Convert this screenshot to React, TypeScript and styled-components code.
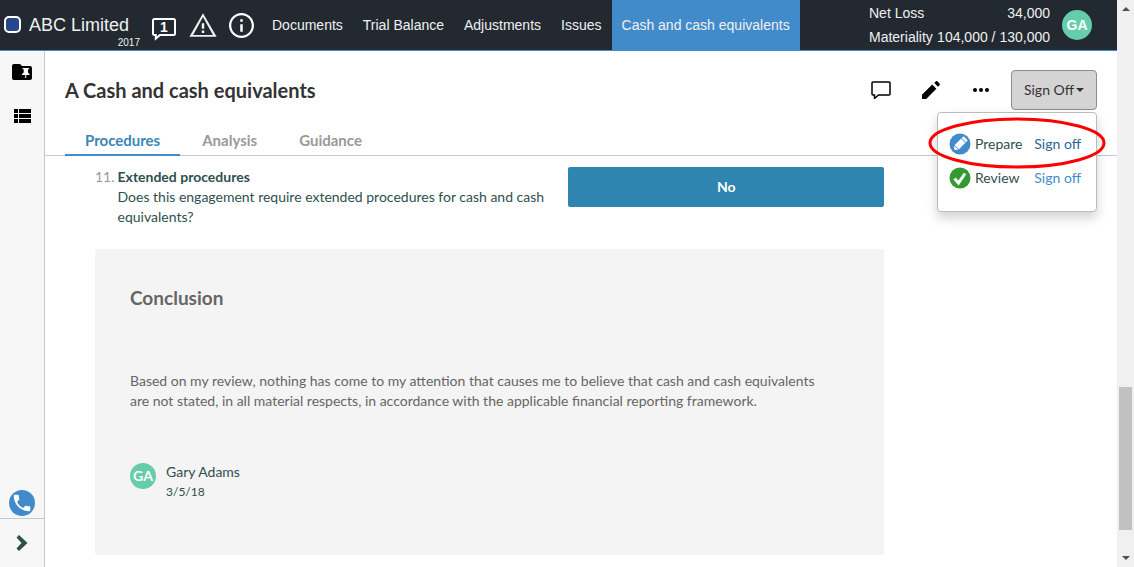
import React from "react";
import styled, { createGlobalStyle } from "styled-components";

const GlobalStyle = createGlobalStyle`
  *, *::before, *::after { box-sizing: border-box; }
  body {
    margin: 0;
    background: #fff;
    color: #2f4f4f;
    font: 14px/20px Lato, "Open Sans", sans-serif;
  }
  button { font: inherit; color: inherit; border: 0; background: none; padding: 0; cursor: pointer; }
  a { text-decoration: none; }
  h1, h2, h3, p, dl, dd, ul, ol { margin: 0; padding: 0; }
  svg { display: block; }
`;

const Screen = styled.div`
  display: flex;
  height: 100vh;
  overflow: hidden;
`;

const Page = styled.div`
  flex: 1;
  min-width: 0;
  display: flex;
  flex-direction: column;
`;

const TopBar = styled.header`
  display: flex;
  flex: none;
  height: 51px;
  padding: 0 25px 0 4px;
  background: #232930;
  border-bottom: 1px solid #428bca;
  color: #f0f0f0;
  font-family: "Liberation Sans", Arial, sans-serif;
`;

const Brand = styled.a`
  display: flex;
  gap: 8px;
  padding-top: 15px;
  color: inherit;
`;

const BrandMark = styled.span`
  width: 17px;
  height: 17px;
  margin-top: 1px;
  border: 2px solid #fff;
  border-radius: 5px;
  background: #27478d;
`;

const BrandText = styled.span`
  display: flex;
  flex-direction: column;
  width: 111px;
  font-size: 18px;
`;

const Year = styled.small`
  align-self: flex-end;
  font-size: 10px;
  line-height: 16px;
`;

const StatusIcons = styled.div`
  display: flex;
  align-items: center;
  gap: 12px;
  margin: 0 8px 0 11px;
`;

const IconButton = styled.button`
  display: flex;
  align-items: center;
  justify-content: center;
`;

const Nav = styled.nav`
  display: flex;
`;

const NavLink = styled.a<{ $active?: boolean }>`
  padding: 0 10px;
  line-height: 50px;
  white-space: nowrap;
  color: inherit;
  background: ${(p) => (p.$active ? "#428bca" : "transparent")};
`;

const Figures = styled.dl`
  margin-left: auto;
  padding-top: 1px;
  width: 181px;
  line-height: 24px;
`;

const Figure = styled.div`
  display: flex;
  justify-content: space-between;
  white-space: nowrap;
`;

const Avatar = styled.span<{ $size: number }>`
  display: flex;
  flex: none;
  align-items: center;
  justify-content: center;
  width: ${(p) => p.$size}px;
  height: ${(p) => p.$size}px;
  border-radius: 50%;
  background: #66cdaa;
  color: #fff;
  font-weight: bold;
`;

const UserButton = styled(IconButton)`
  margin-left: 12px;
`;

const Body = styled.div`
  flex: 1;
  min-height: 0;
  display: flex;
`;

const Sidebar = styled.aside`
  display: flex;
  flex-direction: column;
  align-items: center;
  flex: none;
  width: 45px;
  padding-top: 10px;
  background: #f7f7f7;
  border-right: 1px solid #c8c8c8;
`;

const SideButton = styled(IconButton)`
  width: 24px;
  height: 22px;
  margin-bottom: 22px;
`;

const CallButton = styled(IconButton)`
  width: 26px;
  height: 26px;
  margin: auto 0 2px;
  border-radius: 50%;
  background: #428bca;
`;

const ExpandButton = styled(IconButton)`
  width: 100%;
  height: 49px;
  border-top: 1px solid #c8c8c8;
`;

const Main = styled.main`
  flex: 1;
  min-width: 0;
`;

const TitleRow = styled.div`
  display: flex;
  align-items: center;
  justify-content: space-between;
  padding: 19px 20px 0;
`;

const Title = styled.h1`
  color: #333;
  font-size: 20px;
  line-height: 40px;
`;

const Tools = styled.div`
  display: flex;
  align-items: center;
  gap: 26px;
  color: #000;
`;

const ToolButton = styled(IconButton)`
  width: 24px;
  height: 24px;
`;

const SignOffWrap = styled.div`
  position: relative;
  margin-left: -8px;
`;

const SignOffButton = styled.button`
  display: flex;
  align-items: center;
  justify-content: center;
  gap: 2px;
  width: 86px;
  height: 40px;
  border: 1px solid #8c8c8c;
  border-radius: 4px;
  background: #d4d4d4;
  color: #333;
`;

const Caret = styled.span`
  border: 4px solid transparent;
  border-top-color: currentColor;
  border-bottom: 0;
`;

const Menu = styled.ul`
  position: absolute;
  z-index: 1;
  top: 42px;
  right: 0;
  width: 160px;
  height: 100px;
  padding: 20px 15px 0 11px;
  list-style: none;
  background: #fff;
  border: 1px solid #bbb;
  border-radius: 4px;
  box-shadow: 0 6px 12px rgba(0, 0, 0, 0.18);
`;

const MenuItem = styled.li`
  display: flex;
  align-items: center;
  gap: 4px;
  height: 22px;
  margin-bottom: 12px;
  color: #2f4f4f;
`;

const MenuLink = styled.a<{ $hovered?: boolean }>`
  margin-left: auto;
  color: ${(p) => (p.$hovered ? "#2a6496" : "#428bca")};
`;

const Highlight = styled.li`
  position: absolute;
  top: 3px;
  left: -11px;
  pointer-events: none;
`;

const Tabs = styled.div`
  display: flex;
  gap: 2px;
  padding: 16px 20px 0;
  border-bottom: 1px solid #c8c8c8;
`;

const Tab = styled.button<{ $active?: boolean }>`
  height: 30px;
  margin-bottom: -1px;
  padding: 0 20px;
  border-bottom: 2px solid ${(p) => (p.$active ? "#428bca" : "transparent")};
  color: ${(p) => (p.$active ? "#3a87b7" : "#999")};
  font-size: 15px;
  font-weight: bold;
`;

const Content = styled.div`
  padding: 11px 233px 12px 50px;
`;

const Procedure = styled.section`
  display: grid;
  grid-template-columns: 3fr 2fr;
  align-items: start;
`;

const Question = styled.div`
  display: flex;
  gap: 3px;
  padding-right: 15px;
`;

const Ordinal = styled.span`
  color: #999;
`;

const QuestionTitle = styled.h2`
  font-size: 14px;
`;

const Answer = styled.button`
  height: 40px;
  border-radius: 2px;
  background: #2e86b0;
  color: #fff;
  font-weight: bold;
`;

const Conclusion = styled.section`
  margin-top: 22px;
  padding: 35px 35px 53px;
  border-radius: 2px;
  background: #f4f4f4;
  color: #666;
`;

const ConclusionTitle = styled.h2`
  font-size: 19px;
  line-height: 28px;
`;

const Statement = styled.p`
  margin: 59px 30px 51px 0;
`;

const Signature = styled.div`
  display: flex;
  gap: 10px;
  color: #2f4f4f;
`;

const SignatureAvatar = styled(Avatar)`
  margin-top: 1px;
`;

const SignatureText = styled.div`
  display: flex;
  flex-direction: column;
`;

const SignedOn = styled.time`
  font-size: 12px;
`;

const ScrollTrack = styled.div`
  display: flex;
  flex-direction: column;
  align-items: center;
  flex: none;
  width: 17px;
  padding: 7px 2px;
  background: #f0f0f0;
`;

const ScrollArrow = styled.span<{ $down?: boolean }>`
  border: 4px solid transparent;
  ${(p) =>
    p.$down
      ? "border-top-color: #505050; border-bottom: 0;"
      : "border-bottom-color: #505050; border-top: 0;"}
`;

const ScrollThumb = styled.span`
  width: 13px;
  height: 143px;
  margin: auto 0 26px;
  background: #c1c1c1;
`;

const NoteIcon = () => (
  <svg width="26" height="32" viewBox="0 0 26 32" fill="none" stroke="#fff" strokeWidth="2">
    <path d="M3.500 10h19a1.500 1.500 0 0 1 1.500 1.500v13a1.500 1.500 0 0 1-1.500 1.500H9L4.800 29.500V26H3.500A1.500 1.500 0 0 1 2 24.500v-13A1.500 1.500 0 0 1 3.500 10z" />
    <text x="13" y="23" textAnchor="middle" fontSize="14" fontWeight="bold" fill="#fff" stroke="none">1</text>
  </svg>
);

const WarningIcon = () => (
  <svg width="28" height="26" viewBox="1 1 22 21" fill="#f0f0f0">
    <path d="M12 5l8 14.500H4L12 5M12 2L1 21h22L12 2zm1 14h-2v2h2v-2zm0-6h-2v4.500h2V10z" />
  </svg>
);

const InfoIcon = () => (
  <svg width="25" height="25" viewBox="2 2 20 20" fill="#fff">
    <path d="M11 17h2v-6h-2v6zm1-15C6.480 2 2 6.480 2 12s4.480 10 10 10 10-4.480 10-10S17.520 2 12 2zm0 18.200c-4.500 0-8.200-3.700-8.200-8.200S7.500 3.800 12 3.800s8.200 3.700 8.200 8.200-3.700 8.200-8.200 8.200zM11 9h2V7h-2v2z" />
  </svg>
);

const FolderPinIcon = () => (
  <svg width="20" height="16" viewBox="0 0 20 16">
    <path d="M2 0h6l2 2h8a2 2 0 0 1 2 2v10a2 2 0 0 1-2 2H2a2 2 0 0 1-2-2V2a2 2 0 0 1 2-2z" />
    <path fill="#fff" d="M10.500 4h6.500v1.200h-1V8.500l1.500 1.500v1h-3.200v3h-1v-3H10v-1l1.700-1.500V5.200h-1.200z" />
  </svg>
);

const ListIcon = () => (
  <svg width="17" height="14" viewBox="4 5 17 14">
    <path d="M4 14h4v-4H4v4zm0 5h4v-4H4v4zM4 9h4V5H4v4zm5 5h12v-4H9v4zm0 5h12v-4H9v4zM9 5v4h12V5H9z" />
  </svg>
);

const PhoneIcon = () => (
  <svg width="22" height="22" viewBox="0 0 24 24" fill="#fff">
    <path d="M6.620 10.790c1.440 2.830 3.760 5.140 6.590 6.590l2.200-2.200c.27-.27.67-.36 1.020-.24 1.120.37 2.330.57 3.570.57.55 0 1 .45 1 1V20c0 .55-.45 1-1 1-9.390 0-17-7.610-17-17 0-.55.45-1 1-1h3.500c.55 0 1 .45 1 1 0 1.250.2 2.450.57 3.570.11.35.03.74-.25 1.020l-2.200 2.200z" />
  </svg>
);

const ChevronIcon = () => (
  <svg width="12" height="16" viewBox="0 0 12 16" fill="#2f4f4f">
    <path d="M3 0l8.500 8L3 16 .5 13.500 5.500 8 .5 2.500z" />
  </svg>
);

const CommentIcon = () => (
  <svg width="20" height="18" viewBox="0 0 20 18" fill="none" stroke="#000" strokeWidth="1.500">
    <path d="M2 1h16a1 1 0 0 1 1 1v11a1 1 0 0 1-1 1H7.500L3.500 17.500V14H2a1 1 0 0 1-1-1V2a1 1 0 0 1 1-1z" />
  </svg>
);

const PencilIcon = () => (
  <svg width="24" height="24" viewBox="0 0 24 24">
    <path d="M3 16.800V21h4.200L17.400 10.800l-4.200-4.200L3 16.800zM20.710 7.040c.39-.39.39-1.020 0-1.410l-2.340-2.340c-.39-.39-1.020-.39-1.410 0l-1.700 1.700 3.750 3.750 1.700-1.700z" />
  </svg>
);

const MoreIcon = () => (
  <svg width="18" height="6" viewBox="0 0 18 6">
    <circle cx="3" cy="3" r="2" />
    <circle cx="9" cy="3" r="2" />
    <circle cx="15" cy="3" r="2" />
  </svg>
);

const PrepareIcon = () => (
  <svg width="22" height="22" viewBox="0 0 22 22">
    <circle cx="11" cy="11" r="10.500" fill="#428bca" />
    <g fill="#fff" transform="rotate(45 11 11)">
      <path d="M8 4a1 1 0 0 1 1-1h4a1 1 0 0 1 1 1v1.500H8zM8 6.300h6V15.500H8zM8 16.200h6l-3 3z" />
    </g>
  </svg>
);

const ReviewIcon = () => (
  <svg width="22" height="22" viewBox="0 0 22 22">
    <circle cx="11" cy="11" r="10.500" fill="#339933" />
    <path d="M5.500 11.500l4 4.500L16 6.500" fill="none" stroke="#fff" strokeWidth="3" />
  </svg>
);

const links = ["Documents", "Trial Balance", "Adjustments", "Issues", "Cash and cash equivalents"];
const tabs = ["Procedures", "Analysis", "Guidance"];

export default function App() {
  return (
    <Screen>
      <GlobalStyle />
      <Page>
        <TopBar>
          <Brand href="#">
            <BrandMark />
            <BrandText>
              ABC Limited
              <Year>2017</Year>
            </BrandText>
          </Brand>
          <StatusIcons>
            <IconButton aria-label="Notes"><NoteIcon /></IconButton>
            <IconButton aria-label="Warnings"><WarningIcon /></IconButton>
            <IconButton aria-label="Information"><InfoIcon /></IconButton>
          </StatusIcons>
          <Nav>
            {links.map((label, i) => (
              <NavLink key={label} href="#" $active={i === links.length - 1}>{label}</NavLink>
            ))}
          </Nav>
          <Figures>
            <Figure><dt>Net Loss</dt><dd>34,000</dd></Figure>
            <Figure><dt>Materiality</dt><dd>104,000 / 130,000</dd></Figure>
          </Figures>
          <UserButton aria-label="Account"><Avatar $size={30}>GA</Avatar></UserButton>
        </TopBar>
        <Body>
          <Sidebar>
            <SideButton aria-label="Pinned folder"><FolderPinIcon /></SideButton>
            <SideButton aria-label="List"><ListIcon /></SideButton>
            <CallButton aria-label="Call"><PhoneIcon /></CallButton>
            <ExpandButton aria-label="Expand"><ChevronIcon /></ExpandButton>
          </Sidebar>
          <Main>
            <TitleRow>
              <Title>A Cash and cash equivalents</Title>
              <Tools>
                <ToolButton aria-label="Comment"><CommentIcon /></ToolButton>
                <ToolButton aria-label="Edit"><PencilIcon /></ToolButton>
                <ToolButton aria-label="More"><MoreIcon /></ToolButton>
                <SignOffWrap>
                  <SignOffButton aria-expanded="true">Sign Off<Caret /></SignOffButton>
                  <Menu>
                    <MenuItem><PrepareIcon />Prepare<MenuLink href="#" $hovered>Sign off</MenuLink></MenuItem>
                    <MenuItem><ReviewIcon />Review<MenuLink href="#">Sign off</MenuLink></MenuItem>
                    <Highlight aria-hidden="true">
                      <svg width="180" height="54" viewBox="0 0 180 54" fill="none" stroke="#fe0000" strokeWidth="3">
                        <ellipse cx="90" cy="27" rx="87" ry="24" />
                      </svg>
                    </Highlight>
                  </Menu>
                </SignOffWrap>
              </Tools>
            </TitleRow>
            <Tabs role="tablist">
              {tabs.map((label, i) => (
                <Tab key={label} role="tab" aria-selected={i === 0} $active={i === 0}>{label}</Tab>
              ))}
            </Tabs>
            <Content>
              <Procedure>
                <Question>
                  <Ordinal>11.</Ordinal>
                  <div>
                    <QuestionTitle>Extended procedures</QuestionTitle>
                    <p>Does this engagement require extended procedures for cash and cash equivalents?</p>
                  </div>
                </Question>
                <Answer>No</Answer>
              </Procedure>
              <Conclusion>
                <ConclusionTitle>Conclusion</ConclusionTitle>
                <Statement>
                  Based on my review, nothing has come to my attention that causes me to believe that cash and cash
                  equivalents are not stated, in all material respects, in accordance with the applicable financial
                  reporting framework.
                </Statement>
                <Signature>
                  <SignatureAvatar $size={26}>GA</SignatureAvatar>
                  <SignatureText>
                    Gary Adams
                    <SignedOn>3/5/18</SignedOn>
                  </SignatureText>
                </Signature>
              </Conclusion>
            </Content>
          </Main>
        </Body>
      </Page>
      <ScrollTrack>
        <ScrollArrow />
        <ScrollThumb />
        <ScrollArrow $down />
      </ScrollTrack>
    </Screen>
  );
}
